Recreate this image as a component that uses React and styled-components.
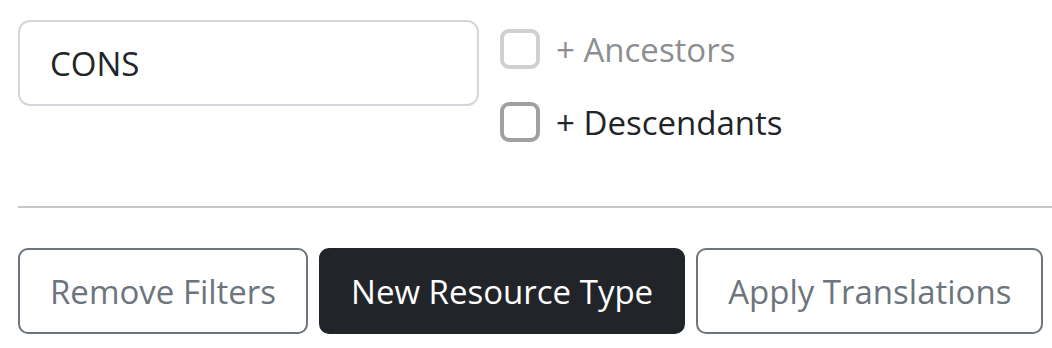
import React from 'react'
import styled, { createGlobalStyle } from 'styled-components'

const GlobalStyle = createGlobalStyle`
  html, body {
    margin: 0;
    padding: 0;
    background: #fff;
  }
  body {
    font-family: 'Open Sans', 'Noto Sans', 'Liberation Sans', sans-serif;
    color: #212529;
  }
`

const Page = styled.div`
  padding: 20px 0 0 18px;
`

const FilterRow = styled.div`
  display: flex;
  align-items: flex-start;
  gap: 21px;
`

const SearchInput = styled.input`
  box-sizing: border-box;
  width: 461px;
  height: 86px;
  padding: 0 30px;
  border: 2px solid #d3d6da;
  border-radius: 12px;
  font-family: inherit;
  font-size: 33px;
  color: #212529;
  background: #fff;
  outline: none;
`

const CheckGroup = styled.div`
  display: flex;
  flex-direction: column;
  gap: 33px;
  padding-top: 9px;
`

const CheckRow = styled.label`
  display: flex;
  align-items: center;
  gap: 16px;
  height: 40px;
  font-size: 33px;
  color: ${({ disabled }) => (disabled ? '#8c8e90' : '#212529')};
`

const Box = styled.span`
  box-sizing: border-box;
  width: 40px;
  height: 40px;
  flex: none;
  border: 4px solid ${({ disabled }) => (disabled ? '#d0d0d0' : '#a0a0a0')};
  border-radius: 9px;
  background: #fff;
`

const Rule = styled.hr`
  margin: 64px 0 40px;
  border: 0;
  border-top: 2px solid #c8c8c8;
`

const ButtonRow = styled.div`
  display: flex;
  gap: 11px;
`

const Button = styled.button`
  box-sizing: border-box;
  height: 86px;
  padding: 0 30px;
  border-radius: 10px;
  font-family: inherit;
  font-size: 33px;
  cursor: pointer;
  border: 2px solid ${({ $dark }) => ($dark ? '#212529' : '#6c757d')};
  background: ${({ $dark }) => ($dark ? '#212529' : '#fff')};
  color: ${({ $dark }) => ($dark ? '#fff' : '#6c757d')};
`

function Check ({ label, disabled }) {
  return (
    <CheckRow disabled={disabled}>
      <Box disabled={disabled} />
      {label}
    </CheckRow>
  )
}

export default function App () {
  return (
    <Page>
      <GlobalStyle />
      <FilterRow>
        <SearchInput defaultValue='CONS' />
        <CheckGroup>
          <Check label='+ Ancestors' disabled />
          <Check label='+ Descendants' />
        </CheckGroup>
      </FilterRow>
      <Rule />
      <ButtonRow>
        <Button>Remove Filters</Button>
        <Button $dark>New Resource Type</Button>
        <Button>Apply Translations</Button>
      </ButtonRow>
    </Page>
  )
}
